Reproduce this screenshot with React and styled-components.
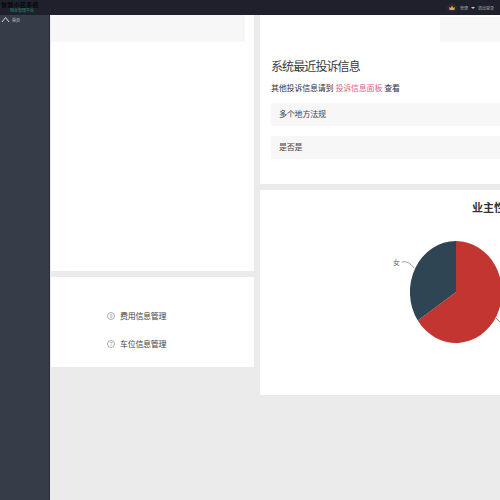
import React from 'react';
import styled, { createGlobalStyle } from 'styled-components';

const Global = createGlobalStyle`
	html, body { margin: 0; padding: 0; background: #ebebeb; }
	body { font-family: "Liberation Sans", "Noto Sans CJK SC", sans-serif; }
`

const Page = styled.div`
	width: 500px;
	height: 500px;
	overflow: hidden;
	display: flex;
	flex-direction: column;
`

const TopBar = styled.header`
	height: 15px;
	flex: none;
	background: #1e212c;
	display: flex;
	align-items: center;
	justify-content: space-between;
	padding: 0 6px 0 1px;
	overflow: hidden;
`

const Logo = styled.div`
	display: flex;
	flex-direction: column;
	line-height: 5px;
	font-size: 6px;
	font-weight: bold;
	color: #07080b;
	letter-spacing: 0.3px;
`

const LogoSub = styled.span`
	font-size: 4px;
	color: #1b6b58;
	margin-left: 9px;
	letter-spacing: 0;
`

const UserBox = styled.div`
	display: flex;
	align-items: center;
	gap: 3px;
	font-size: 4px;
	color: #a9acb5;
`

const Caret = styled.i`
	width: 0;
	height: 0;
	border: 2px solid transparent;
	border-top-color: #c8cad0;
	margin: 2px 0 0 0;
`

const Body = styled.div`
	flex: 1;
	display: flex;
	min-height: 0;
`

const Sidebar = styled.aside`
	width: 49px;
	flex: none;
	background: #373c49;
	border-right: 1px solid #2a2d38;
`

const NavItem = styled.div`
	height: 9px;
	display: flex;
	align-items: center;
	gap: 2px;
	padding-left: 1px;
	font-size: 4px;
	color: #c4c7ce;
`

const Main = styled.main`
	flex: 1;
	display: flex;
	gap: 6px;
	padding-left: 1px;
	min-width: 0;
`

const Column = styled.div`
	width: ${(p) => p.$width}px;
	flex: none;
	display: flex;
	flex-direction: column;
	gap: 6px;
`

const Card = styled.section`
	background: #fff;
	height: ${(p) => p.$height}px;
	flex: none;
	overflow: hidden;
	box-sizing: border-box;
`

const GreyStrip = styled.div`
	height: 27px;
	width: 194px;
	background: #f7f7f7;
`

const TabRow = styled.div`
	height: 27px;
	padding-top: 2px;
	box-sizing: border-box;
	display: flex;
`

const TabGap = styled.div`
	width: 180px;
	background: #fff;
`

const TabRest = styled.div`
	flex: 1;
	background: #f7f7f7;
`

const Complaints = styled.div`
	padding: 16px 0 0 11px;
`

const Title = styled.h2`
	margin: 0;
	font-size: 12px;
	letter-spacing: -0.9px;
	line-height: 18px;
	font-weight: normal;
	color: #3a3a3a;
`

const Hint = styled.p`
	margin: 7px 0 8px;
	font-size: 8px;
	letter-spacing: -0.2px;
	line-height: 12px;
	color: #333;
`

const HintLink = styled.a`
	color: #e0608f;
`

const Notice = styled.div`
	height: 23px;
	margin-bottom: 10px;
	padding-left: 8px;
	background: #f7f7f7;
	font-size: 8px;
	letter-spacing: -0.2px;
	line-height: 23px;
	color: #444;
`

const LinkList = styled.ul`
	list-style: none;
	margin: 0;
	padding: 33px 0 0 56px;
	display: flex;
	flex-direction: column;
	gap: 17px;
`

const LinkItem = styled.li`
	display: flex;
	align-items: center;
	gap: 5px;
	height: 11px;
	font-size: 8px;
	letter-spacing: -0.3px;
	color: #444;
`

const Num = styled.span`
	width: 8px;
	height: 8px;
	border: 1px solid #aaa;
	border-radius: 50%;
	box-sizing: border-box;
	font-size: 5px;
	line-height: 6px;
	text-align: center;
	color: #999;
`

const ChartCard = styled(Card)`
	width: 400px;
	padding-top: 11px;
`

const ChartTitle = styled.h3`
	margin: 0;
	padding-left: 212px;
	font-size: 11px;
	line-height: 15px;
	color: #333;
	white-space: nowrap;
`

const PieSvg = styled.svg`
	display: block;
	margin-top: 0;
`

const Home = () => (
	<svg width="9" height="7" viewBox="0 0 9 7" fill="none" stroke="#d5d7dc" strokeWidth="1">
		<path d="M1 6 L4.5 1.5 L8 6" />
	</svg>
);

const Crown = () => (
	<svg width="10" height="10" viewBox="0 0 10 10">
		<circle cx="5" cy="5" r="5" fill="#2a2730" />
		<path d="M2 4 L3.6 5 L5 2.6 L6.4 5 L8 4 L7.4 7 L2.6 7 Z" fill="#d9a94a" />
	</svg>
);

const Pie = () => {
	// a imagem original vem achatada, por isso a escala diferente em x e y
	return (
		<PieSvg width="240" height="170" viewBox="0 0 240 170">
			<g transform="translate(196 76) scale(46 51)">
				<path d="M0 0 L0 -1 A1 1 0 1 1 -0.83 0.56 Z" fill="#c23531" />
				<path d="M0 0 L-0.83 0.56 A1 1 0 0 1 0 -1 Z" fill="#2f4554" />
			</g>
			<path d="M142 46 C147 45 150 47 154 52" fill="none" stroke="#777" strokeWidth="0.7" />
			<text x="133" y="49" fontSize="7" fill="#666">女</text>
			<path d="M236 102 L240 106" fill="none" stroke="#c23531" strokeWidth="0.7" />
		</PieSvg>
	);
};

const App = () => {
	return (
		<Page>
			<Global />
			<TopBar>
				<Logo>
					<span>智慧小区系统</span>
					<LogoSub>物业管理平台</LogoSub>
				</Logo>
				<UserBox>
					<Crown />
					<span>管理</span>
					<Caret />
					<span>退出登录</span>
				</UserBox>
			</TopBar>
			<Body>
				<Sidebar>
					<NavItem><Home />首页</NavItem>
				</Sidebar>
				<Main>
					<Column $width={203}>
						<Card $height={256}>
							<GreyStrip />
						</Card>
						<Card $height={90}>
							<LinkList>
								<LinkItem><Num>9</Num>费用信息管理</LinkItem>
								<LinkItem><Num>7</Num>车位信息管理</LinkItem>
							</LinkList>
						</Card>
					</Column>
					<Column $width={240}>
						<Card $height={169}>
							<TabRow>
								<TabGap />
								<TabRest />
							</TabRow>
							<Complaints>
								<Title>系统最近投诉信息</Title>
								<Hint>其他投诉信息请到 <HintLink>投诉信息面板</HintLink> 查看</Hint>
								<Notice>多个地方法规</Notice>
								<Notice>是否是</Notice>
							</Complaints>
						</Card>
						<ChartCard $height={205}>
							<ChartTitle>业主性别比例</ChartTitle>
							<Pie />
						</ChartCard>
					</Column>
				</Main>
			</Body>
		</Page>
	);
}
export default App;
